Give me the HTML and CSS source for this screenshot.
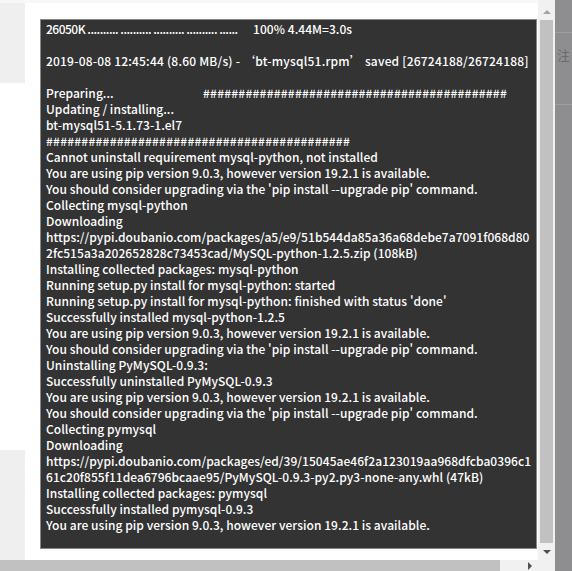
FILE: index.html
```html
<!DOCTYPE html>
<html lang="zh-CN">
<head>
    <meta charset="UTF-8">
    <title>安装日志</title>
    <link rel="stylesheet" href="styles.css">
</head>
<body>
    <div class="frame">
        <div class="viewport">
            <div class="topline"></div>
            <div class="page">
                <div class="side">
                    <div class="side-box"></div>
                    <div class="side-fill"></div>
                    <div class="side-box side-bottom"></div>
                </div>
                <div class="main">
                    <div class="console">
                        <div class="ln"><span class="col dots" style="width: 207px">26050K .......... .......... .......... .......... ......</span>100% 4.44M=3.0s</div>
                        <div class="ln"> </div>
                        <div class="ln wide">2019-08-08 12:45:44 (8.60 MB/s) - ‘bt-mysql51.rpm’ saved [26724188/26724188]</div>
                        <div class="ln"> </div>
                        <div class="ln"><span class="col" style="width: 157px">Preparing...</span><span class="hash">###########################################</span></div>
                        <div class="ln">Updating / installing...</div>
                        <div class="ln">bt-mysql51-5.1.73-1.el7</div>
                        <div class="ln"><span class="hash">###########################################</span></div>
                        <div class="ln">Cannot uninstall requirement mysql-python, not installed</div>
                        <div class="ln">You are using pip version 9.0.3, however version 19.2.1 is available.</div>
                        <div class="ln">You should consider upgrading via the 'pip install --upgrade pip' command.</div>
                        <div class="ln">Collecting mysql-python</div>
                        <div class="ln">Downloading</div>
                        <div class="ln">https://pypi.doubanio.com/packages/a5/e9/51b544da85a36a68debe7a7091f068d80</div>
                        <div class="ln">2fc515a3a202652828c73453cad/MySQL-python-1.2.5.zip (108kB)</div>
                        <div class="ln">Installing collected packages: mysql-python</div>
                        <div class="ln">Running setup.py install for mysql-python: started</div>
                        <div class="ln">Running setup.py install for mysql-python: finished with status 'done'</div>
                        <div class="ln">Successfully installed mysql-python-1.2.5</div>
                        <div class="ln">You are using pip version 9.0.3, however version 19.2.1 is available.</div>
                        <div class="ln">You should consider upgrading via the 'pip install --upgrade pip' command.</div>
                        <div class="ln">Uninstalling PyMySQL-0.9.3:</div>
                        <div class="ln">Successfully uninstalled PyMySQL-0.9.3</div>
                        <div class="ln">You are using pip version 9.0.3, however version 19.2.1 is available.</div>
                        <div class="ln">You should consider upgrading via the 'pip install --upgrade pip' command.</div>
                        <div class="ln">Collecting pymysql</div>
                        <div class="ln">Downloading</div>
                        <div class="ln">https://pypi.doubanio.com/packages/ed/39/15045ae46f2a123019aa968dfcba0396c1</div>
                        <div class="ln">61c20f855f11dea6796bcaae95/PyMySQL-0.9.3-py2.py3-none-any.whl (47kB)</div>
                        <div class="ln">Installing collected packages: pymysql</div>
                        <div class="ln">Successfully installed pymysql-0.9.3</div>
                        <div class="ln">You are using pip version 9.0.3, however version 19.2.1 is available.</div>
                    </div>
                </div>
            </div>
        </div>
        <div class="vbar">
            <div class="arrow-btn"><span class="tri tri-up"></span></div>
            <div class="vtrack"><div class="vthumb"></div></div>
            <div class="arrow-btn"><span class="tri tri-down"></span></div>
        </div>
        <div class="hbar">
            <div class="hthumb"></div>
            <div class="arrow-btn harrow"><span class="tri tri-right"></span></div>
        </div>
        <div class="corner"></div>
    </div>
    <div class="backdrop">
        <div class="bd-row bd-head"></div>
        <div class="bd-row bd-cell"><span class="bd-text">注</span></div>
        <div class="bd-row bd-rest"></div>
    </div>
</body>
</html>
```

FILE: styles.css
```css
body {
    margin: 0;
    width: 572px;
    height: 571px;
    overflow: hidden;
    display: flex;
    background-color: #8e8e91;
    font-family: "Noto Sans CJK SC", "Noto Sans", sans-serif;
}
.frame {
    width: 555px;
    height: 571px;
    flex: none;
    display: grid;
    grid-template-columns: 538px 17px;
    grid-template-rows: 560px 11px;
    background-color: #fff;
}
.viewport {
    overflow: hidden;
    display: flex;
    flex-direction: column;
}
.topline {
    height: 3px;
    flex: none;
    background-color: #f7f7f7;
}
.page {
    flex: 1;
    display: flex;
}
.side {
    width: 25px;
    flex: none;
    display: flex;
    flex-direction: column;
}
.side-box {
    height: 80px;
    background-color: #efefef;
}
.side-fill {
    flex: 1;
}
.side-bottom {
    height: 110px;
}
.main {
    flex: 1;
    padding: 16px 0 0 15px;
}
.console {
    width: 497px;
    height: 530px;
    box-sizing: border-box;
    border: 1px solid #888;
    background-color: #333;
    color: #fff;
    padding: 1px 0 0 5px;
    font-size: 12px;
    font-weight: 500;
    line-height: 16px;
    letter-spacing: 0.05px;
    overflow: hidden;
}
.ln {
    white-space: pre;
    height: 16px;
}
.wide {
    letter-spacing: 0.2px;
}
.col {
    display: inline-block;
}
.dots {
    letter-spacing: -0.5px;
}
.hash {
    letter-spacing: 0.23px;
}
.vbar {
    display: flex;
    flex-direction: column;
    background-color: #f1f1f1;
    padding-top: 3px;
}
.arrow-btn {
    height: 17px;
    display: flex;
    align-items: center;
    justify-content: center;
}
.vtrack {
    flex: 1;
    padding: 0 2px;
}
.vthumb {
    height: 100%;
    background-color: #c1c1c1;
}
.hbar {
    display: flex;
    background-color: #f1f1f1;
}
.hthumb {
    width: 500px;
    background-color: #c1c1c1;
}
.harrow {
    width: 17px;
    height: 11px;
    margin-left: auto;
}
.corner {
    background-color: #f1f1f1;
}
.tri {
    width: 0;
    height: 0;
    border: 4px solid transparent;
}
.tri-up {
    border-bottom-color: #a3a3a3;
    border-top-width: 0;
}
.tri-down {
    border-top-color: #505050;
    border-bottom-width: 0;
}
.tri-right {
    border-left-color: #505050;
    border-right-width: 0;
}
.backdrop {
    flex: 1;
    display: flex;
    flex-direction: column;
    overflow: hidden;
}
.bd-row {
    border-bottom: 1px solid #9e9ea1;
}
.bd-head {
    height: 32px;
}
.bd-cell {
    height: 71px;
    line-height: 44px;
    font-size: 13px;
    color: #6a6a6d;
    padding-left: 2px;
}
.bd-rest {
    flex: 1;
    border-bottom: none;
}
```
